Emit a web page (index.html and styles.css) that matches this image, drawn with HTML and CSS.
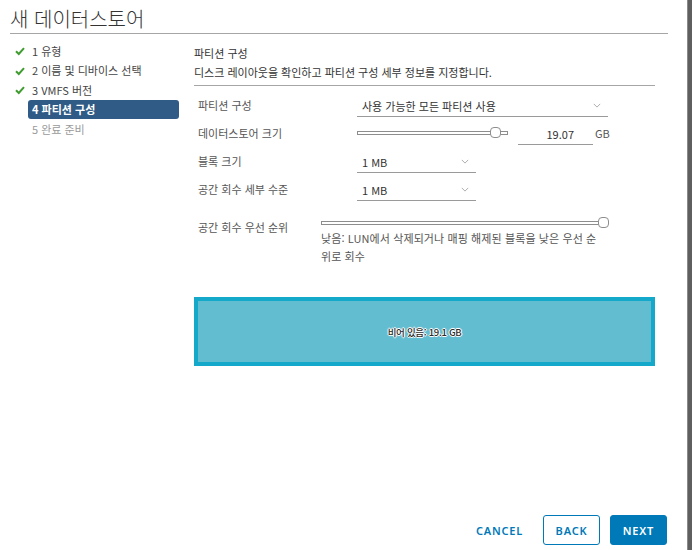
FILE: index.html
```html
<!DOCTYPE html>
<html lang="ko">
<head>
<meta charset="utf-8">
<link rel="stylesheet" href="styles.css">
</head>
<body>
<div class="dialog">
  <div class="header"><h1 class="title">새 데이터스토어</h1></div>
  <div class="main">
    <ul class="steps">
      <li class="step done"><svg class="check" viewBox="0 0 10 10"><path d="M1 5.2 L3.8 8 L9 2.2"/></svg><span>1 유형</span></li>
      <li class="step done"><svg class="check" viewBox="0 0 10 10"><path d="M1 5.2 L3.8 8 L9 2.2"/></svg><span>2 이름 및 디바이스 선택</span></li>
      <li class="step done"><svg class="check" viewBox="0 0 10 10"><path d="M1 5.2 L3.8 8 L9 2.2"/></svg><span>3 VMFS 버전</span></li>
      <li class="step active"><span>4 파티션 구성</span></li>
      <li class="step todo"><span>5 완료 준비</span></li>
    </ul>
    <div class="content">
      <div class="intro">
        <div class="intro-title">파티션 구성</div>
        <div class="intro-desc">디스크 레이아웃을 확인하고 파티션 구성 세부 정보를 지정합니다.</div>
      </div>
      <div class="form">
        <div class="row">
          <div class="label">파티션 구성</div>
          <div class="select wide"><span>사용 가능한 모든 파티션 사용</span><svg class="chev" viewBox="0 0 10 6"><path d="M1 1 L5 5 L9 1"/></svg></div>
        </div>
        <div class="row">
          <div class="label">데이터스토어 크기</div>
          <div class="slider size"><div class="track"></div><div class="thumb"></div></div>
          <div class="num">19.07</div>
          <div class="unit">GB</div>
        </div>
        <div class="row">
          <div class="label">블록 크기</div>
          <div class="select narrow"><span>1 MB</span><svg class="chev" viewBox="0 0 10 6"><path d="M1 1 L5 5 L9 1"/></svg></div>
        </div>
        <div class="row">
          <div class="label">공간 회수 세부 수준</div>
          <div class="select narrow"><span>1 MB</span><svg class="chev" viewBox="0 0 10 6"><path d="M1 1 L5 5 L9 1"/></svg></div>
        </div>
        <div class="row prio">
          <div class="label short">공간 회수 우선 순위</div>
          <div class="prio-ctrl">
            <div class="slider full"><div class="track"></div><div class="thumb"></div></div>
            <div class="help">낮음: LUN에서 삭제되거나 매핑 해제된 블록을 낮은 우선 순<br>위로 회수</div>
          </div>
        </div>
      </div>
      <div class="disk"><span>비어 있음: 19.1 GB</span></div>
    </div>
  </div>
  <div class="footer">
    <button class="btn link">CANCEL</button>
    <button class="btn outline">BACK</button>
    <button class="btn primary">NEXT</button>
  </div>
</div>
<div class="backdrop"></div>
</body>
</html>
```
FILE: styles.css
```css
* { box-sizing: border-box; }
html, body { margin: 0; padding: 0; }
body {
  width: 692px;
  height: 550px;
  display: flex;
  overflow: hidden;
  font-family: "Noto Sans CJK KR", "Noto Sans", sans-serif;
  font-size: 11px;
  color: #333;
  background: #fff;
}
.dialog {
  width: 687px;
  height: 550px;
  display: flex;
  flex-direction: column;
  background: #fff;
}
.backdrop {
  width: 5px;
  height: 550px;
  background: #5f5f5f;
  border-left: 1px solid #8a8a8a;
}
.header { padding: 0 19px 0 10px; }
.title {
  margin: 0;
  padding: 6px 0 2px 0;
  font-size: 20px;
  line-height: 25px;
  font-weight: 300;
  color: #333;
  border-bottom: 1px solid #a6a6a6;
}
.main {
  display: flex;
  flex: 1;
}
.steps {
  list-style: none;
  margin: 0;
  padding: 7px 0 0 0;
  width: 194px;
}
.step {
  height: 19.5px;
  display: flex;
  align-items: center;
  margin-left: 28px;
  width: 151px;
  padding-left: 4px;
  color: #444;
  position: relative;
}
.check {
  position: absolute;
  left: -13px;
  top: 5px;
  width: 10px;
  height: 10px;
  fill: none;
  stroke: #3f9c2f;
  stroke-width: 2;
}
.step.active {
  background: #2f5b86;
  color: #fff;
  font-weight: 700;
  border-radius: 3px;
}
.step.todo { color: #9a9a9a; }
.content {
  width: 461px;
  display: flex;
  flex-direction: column;
}
.intro {
  padding-top: 10px;
  border-bottom: 1px solid #a6a6a6;
  padding-bottom: 3px;
}
.intro-title { line-height: 19px; font-weight: 400; }
.intro-desc { line-height: 19px; }
.form { padding-top: 5px; }
.row {
  display: flex;
  align-items: center;
  height: 28px;
  padding-left: 4px;
}
.label {
  width: 159px;
  color: #555;
}
.select {
  height: 22px;
  display: flex;
  align-items: center;
  justify-content: space-between;
  padding: 0 5px;
  border-bottom: 1px solid #9a9a9a;
  margin-top: 2px;
}
.select.wide { width: 251px; }
.select.narrow { width: 119px; }
.chev {
  width: 8px;
  height: 5px;
  fill: none;
  stroke: #999;
  stroke-width: 1;
  margin-right: 2px;
}
.slider { position: relative; height: 12px; }
.slider.size { width: 151px; }
.slider.full { width: 287px; }
.track {
  position: absolute;
  left: 0;
  right: 0;
  top: 4px;
  height: 4px;
  border: 1px solid #8d8d8d;
  background: #fff;
}
.thumb {
  position: absolute;
  top: 0;
  width: 11px;
  height: 11px;
  border: 1px solid #8d8d8d;
  border-radius: 4px;
  background: #fff;
}
.slider.size .thumb { left: 133px; }
.slider.full .thumb { right: -1px; }
.num {
  margin-left: 10px;
  width: 75px;
  height: 22px;
  line-height: 22px;
  text-align: right;
  padding-right: 19px;
  border-bottom: 1px solid #9a9a9a;
  margin-top: 2px;
}
.unit { margin-left: 2px; color: #555; }
.row.prio {
  height: auto;
  align-items: flex-start;
  margin-top: 11px;
}
.label.short { width: 123px; padding-top: 5px; }
.prio-ctrl { display: flex; flex-direction: column; padding-top: 3px; }
.help {
  margin-top: 0;
  line-height: 18px;
  color: #555;
  white-space: nowrap;
  letter-spacing: 0.1px;
}
.disk {
  margin-top: 32px;
  height: 69px;
  border: 4px solid #14a9ca;
  background: #63bdd0;
  display: flex;
  align-items: center;
  justify-content: center;
}
.disk span {
  font-size: 9.5px;
  font-weight: 500;
  color: #2a2a2a;
  letter-spacing: -0.3px;
  text-shadow: 1px 0 0 #fff, -1px 0 0 #fff, 0 1px 0 #fff, 0 -1px 0 #fff, 0 0 2px #fff;
}
.footer {
  display: flex;
  justify-content: flex-end;
  align-items: center;
  gap: 10px;
  padding: 0 20px 3px 0;
  height: 37px;
}
.btn {
  font-family: "Noto Sans", "Liberation Sans", sans-serif;
  height: 30px;
  font-size: 11px;
  font-weight: 600;
  letter-spacing: 0.8px;
  border-radius: 3px;
  padding: 0;
  cursor: pointer;
}
.btn.link {
  background: none;
  border: none;
  color: #0079b8;
  width: 57px;
  margin-right: 5px;
}
.btn.outline {
  background: #fff;
  border: 1px solid #0079b8;
  color: #0079b8;
  width: 57px;
}
.btn.primary {
  background: #0079b8;
  border: 1px solid #0079b8;
  color: #fff;
  width: 57px;
}
```
